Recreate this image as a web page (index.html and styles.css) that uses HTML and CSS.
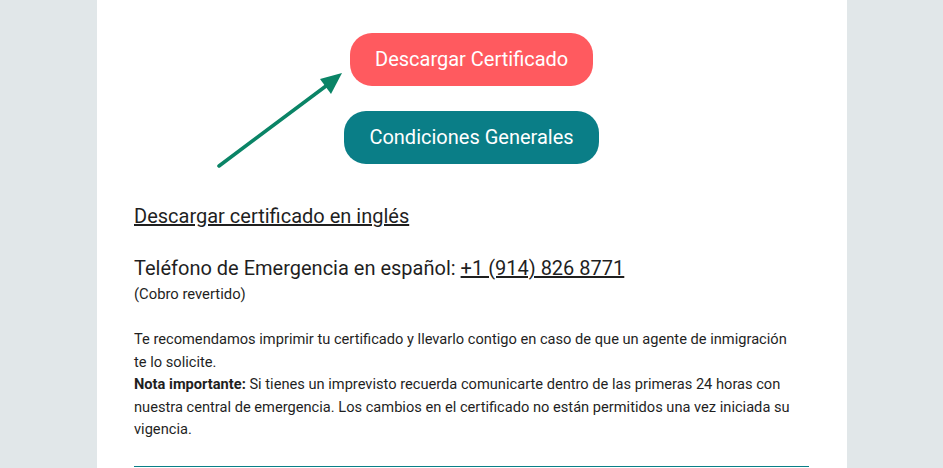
FILE: index.html
```html
<!DOCTYPE html>
<html lang="es">
<head>
<meta charset="utf-8">
<link rel="stylesheet" href="styles.css">
</head>
<body>
<div class="page">
  <div class="actions">
    <svg class="arrow" width="140" height="110" viewBox="0 0 140 110">
      <line x1="9" y1="102" x2="120" y2="19" stroke="#0a8466" stroke-width="3.6" stroke-linecap="round"/>
      <polygon points="132,9 110,15 121,30" fill="#0a8466"/>
    </svg>
    <a class="btn btn-red" href="#">Descargar Certificado</a>
    <a class="btn btn-teal" href="#">Condiciones Generales</a>
  </div>
  <p class="link-line"><a href="#">Descargar certificado en inglés</a></p>
  <p class="phone">Teléfono de Emergencia en español: <a href="#">+1 (914) 826 8771</a></p>
  <p class="small">(Cobro revertido)</p>
  <p class="text">Te recomendamos imprimir tu certificado y llevarlo contigo en caso de que un agente de inmigración<br>te lo solicite.<br><b>Nota importante:</b> Si tienes un imprevisto recuerda comunicarte dentro de las primeras 24 horas con nuestra central de emergencia. Los cambios en el certificado no están permitidos una vez iniciada su vigencia.</p>
  <hr class="divider">
</div>
</body>
</html>
```
FILE: styles.css
```css
html, body {
  margin: 0;
  padding: 0;
}
body {
  background: #e1e7e9;
  font-family: Roboto, "Liberation Sans", Arial, sans-serif;
  color: #1f1f1f;
}
.page {
  width: 675px;
  margin: 0 0 0 97px;
  background: #ffffff;
  padding: 33px 38px 40px 37px;
  min-height: 468px;
  box-sizing: content-box;
}
.actions {
  position: relative;
  display: flex;
  flex-direction: column;
  align-items: center;
  gap: 25px;
}
.arrow {
  position: absolute;
  left: 76px;
  top: 31px;
}
.btn {
  display: block;
  height: 53px;
  line-height: 53px;
  padding: 0 25px;
  border-radius: 22px;
  color: #ffffff;
  font-size: 20px;
  text-decoration: none;
  white-space: nowrap;
}
.btn-red {
  background: #ff5a5f;
  width: 193px;
  text-align: center;
}
.btn-teal {
  background: #0a7e87;
  width: 205px;
  text-align: center;
}
p {
  margin: 0;
}
a {
  color: #1f1f1f;
}
.link-line {
  font-size: 20px;
  line-height: 24px;
  margin-top: 40px;
}
.phone {
  font-size: 20px;
  line-height: 24px;
  margin-top: 28px;
}
.small {
  font-size: 14.8px;
  line-height: 20px;
  margin-top: 4px;
}
.text {
  font-size: 14.65px;
  line-height: 22.6px;
  margin-top: 24px;
}
.divider {
  border: 0;
  border-top: 1px solid #0a7e87;
  margin: 25px 0 0 0;
}
```
